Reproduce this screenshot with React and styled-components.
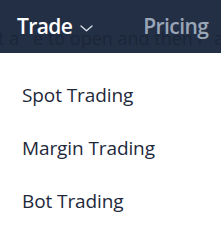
import React from "react";
import styled, { createGlobalStyle } from "styled-components";

const Global = createGlobalStyle`
  html, body { margin: 0; padding: 0; background: #ffffff; }
  body { font-family: "Open Sans", "Noto Sans", sans-serif; }
`;

const Page = styled.div`
  width: 221px;
  height: 225px;
  overflow: hidden;
  position: relative;
  background: #ffffff;
`;

const Header = styled.header`
  position: relative;
  height: 53px;
  background: #232f45;
  display: flex;
  align-items: center;
  padding: 0 0 0 17px;
  overflow: hidden;
`;

const Ghost = styled.div`
  position: absolute;
  left: -2px;
  top: 26px;
  font-size: 18px;
  white-space: nowrap;
  color: #1c2639;
`;

const NavItem = styled.div`
  position: relative;
  display: flex;
  align-items: center;
  gap: 8px;
  font-size: 21px;
  font-weight: 600;
  line-height: 1;
  padding-bottom: 1px;
  color: ${(p) => (p.$active ? "#ffffff" : "#9aa6b8")};
  margin-right: ${(p) => p.$mr || 0}px;
  letter-spacing: -0.6px;
`;

const Chevron = styled.svg`
  margin-top: 4px;
`;

const Menu = styled.ul`
  list-style: none;
  margin: 0;
  padding: 15px 0 0 22px;
  display: flex;
  flex-direction: column;
`;

const MenuItem = styled.li`
  height: 53px;
  display: flex;
  align-items: center;
  font-size: 19px;
  letter-spacing: -0.1px;
  color: #1e293b;
`;

export default function App() {
  return (
    <Page>
      <Global />
      <Header>
        <Ghost>t a&nbsp;&nbsp;&nbsp;e to open and then r&nbsp;&nbsp;ai</Ghost>
        <NavItem $active $mr={50}>
          Trade
          <Chevron width="13" height="7" viewBox="0 0 13 7" fill="none">
            <path d="M1 1 L6.5 5.8 L12 1" stroke="#d4dbe5" strokeWidth="1.4" strokeLinecap="round" strokeLinejoin="round" />
          </Chevron>
        </NavItem>
        <NavItem>Pricing</NavItem>
      </Header>
      <Menu>
        <MenuItem>Spot Trading</MenuItem>
        <MenuItem>Margin Trading</MenuItem>
        <MenuItem>Bot Trading</MenuItem>
      </Menu>
    </Page>
  );
}
